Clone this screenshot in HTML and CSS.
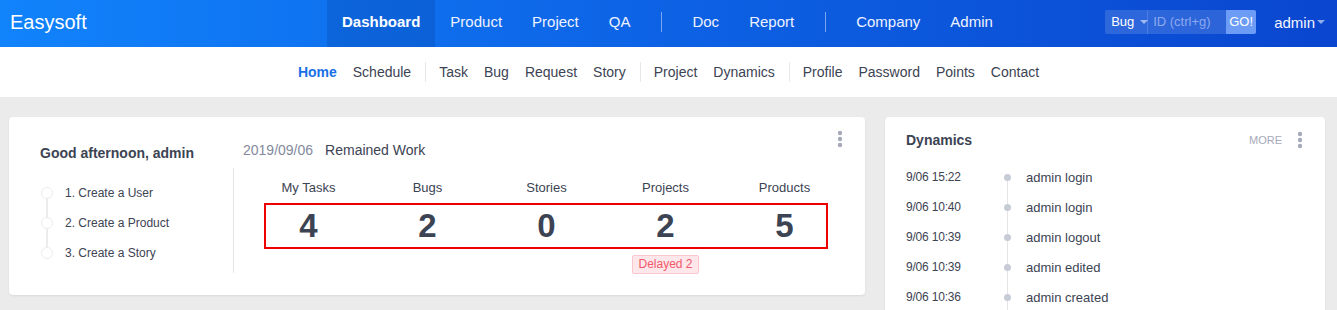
FILE: index.html
```html
<!DOCTYPE html>
<html lang="en">
<head>
<meta charset="utf-8">
<title>Easysoft Dashboard</title>
<link rel="stylesheet" href="styles.css">
</head>
<body>
<header class="topbar">
  <div class="brand">Easysoft</div>
  <nav class="mainnav">
    <a class="nav-item active" href="#">Dashboard</a>
    <a class="nav-item" href="#">Product</a>
    <a class="nav-item" href="#">Project</a>
    <a class="nav-item" href="#">QA</a>
    <span class="nav-sep"></span>
    <a class="nav-item" href="#">Doc</a>
    <a class="nav-item" href="#">Report</a>
    <span class="nav-sep"></span>
    <a class="nav-item" href="#">Company</a>
    <a class="nav-item" href="#">Admin</a>
  </nav>
  <div class="search">
    <span class="search-type">Bug<i class="caret caret-dim"></i></span>
    <input class="search-input" type="text" placeholder="ID (ctrl+g)">
    <button class="search-go">GO!</button>
  </div>
  <div class="user">admin<i class="caret caret-dim"></i></div>
</header>

<nav class="subnav">
  <a class="sub-item active" href="#">Home</a>
  <a class="sub-item" href="#">Schedule</a>
  <span class="sub-sep"></span>
  <a class="sub-item" href="#">Task</a>
  <a class="sub-item" href="#">Bug</a>
  <a class="sub-item" href="#">Request</a>
  <a class="sub-item" href="#">Story</a>
  <span class="sub-sep"></span>
  <a class="sub-item" href="#">Project</a>
  <a class="sub-item" href="#">Dynamics</a>
  <span class="sub-sep"></span>
  <a class="sub-item" href="#">Profile</a>
  <a class="sub-item" href="#">Password</a>
  <a class="sub-item" href="#">Points</a>
  <a class="sub-item" href="#">Contact</a>
</nav>

<main class="content">
  <section class="card welcome">
    <div class="greeting">Good afternoon, admin</div>
    <div class="work-title"><span class="date">2019/09/06</span><span class="remained">Remained Work</span></div>
    <ul class="steps">
      <li class="step"><span class="step-dot"></span>1. Create a User</li>
      <li class="step"><span class="step-dot"></span>2. Create a Product</li>
      <li class="step"><span class="step-dot"></span>3. Create a Story</li>
    </ul>
    <div class="stats">
      <div class="stat-labels">
        <span>My Tasks</span><span>Bugs</span><span>Stories</span><span>Projects</span><span>Products</span>
      </div>
      <div class="stat-values">
        <span>4</span><span>2</span><span>0</span><span>2</span><span>5</span>
      </div>
      <div class="stat-notes">
        <span></span><span></span><span></span><span><em class="badge">Delayed 2</em></span><span></span>
      </div>
    </div>
    <svg class="kebab" width="6" height="18" viewBox="0 0 6 18"><circle cx="3" cy="3" r="2.2"/><circle cx="3" cy="9" r="2.2"/><circle cx="3" cy="15" r="2.2"/></svg>
  </section>

  <section class="card dynamics">
    <div class="dyn-head">
      <h3 class="dyn-title">Dynamics</h3>
      <span class="more">MORE</span>
      <svg class="kebab-inline" width="6" height="18" viewBox="0 0 6 18"><circle cx="3" cy="3" r="2.2"/><circle cx="3" cy="9" r="2.2"/><circle cx="3" cy="15" r="2.2"/></svg>
    </div>
    <ul class="dyn-list">
      <li class="dyn-row first"><span class="dyn-time">9/06 15:22</span><span class="dyn-dot"></span><span class="dyn-text">admin login</span></li>
      <li class="dyn-row"><span class="dyn-time">9/06 10:40</span><span class="dyn-dot"></span><span class="dyn-text">admin login</span></li>
      <li class="dyn-row"><span class="dyn-time">9/06 10:39</span><span class="dyn-dot"></span><span class="dyn-text">admin logout</span></li>
      <li class="dyn-row"><span class="dyn-time">9/06 10:39</span><span class="dyn-dot"></span><span class="dyn-text">admin edited</span></li>
      <li class="dyn-row"><span class="dyn-time">9/06 10:36</span><span class="dyn-dot"></span><span class="dyn-text">admin created</span></li>
    </ul>
  </section>
</main>
</body>
</html>
```
FILE: styles.css
```css
* { box-sizing: border-box; }
html, body { margin: 0; padding: 0; }
body {
  font-family: "Liberation Sans", Arial, sans-serif;
  background: #ebebeb;
  color: #3c4353;
  overflow: hidden;
}
a { text-decoration: none; color: inherit; }
ul { list-style: none; margin: 0; padding: 0; }

/* top bar */
.topbar {
  height: 47px;
  display: flex;
  align-items: center;
  background: linear-gradient(90deg, #1183fb 0%, #0d62e4 50%, #0a46cf 100%);
  color: #fff;
  padding-right: 12px;
}
.brand {
  width: 327px;
  padding: 0 0 3px 10px;
  font-size: 20px;
  line-height: 44px;
  color: #fff;
}
.mainnav {
  display: flex;
  align-items: center;
  height: 47px;
}
.nav-item {
  display: block;
  padding: 0 15px 3px;
  line-height: 44px;
  font-size: 15px;
  color: #eef3ff;
}
.nav-item.active {
  background: rgba(0, 40, 120, 0.18);
  font-weight: bold;
  color: #fff;
}
.nav-sep {
  width: 1px;
  height: 20px;
  margin: 0 15px 3px 16px;
  background: rgba(255, 255, 255, 0.45);
}
.search {
  margin-left: auto;
  margin-bottom: 4px;
  display: flex;
  height: 24px;
  background: rgba(255, 255, 255, 0.14);
  border-radius: 2px;
  font-size: 13px;
}
.search-type {
  display: flex;
  align-items: center;
  padding: 0 4px 0 6px;
  width: 43px;
  border-right: 1px solid rgba(255, 255, 255, 0.16);
  color: #fff;
}
.search-input {
  width: 78px;
  border: 0;
  background: transparent;
  font: 13px "Liberation Sans", Arial, sans-serif;
  color: #fff;
  padding: 0 0 0 5px;
  outline: none;
}
.search-input::placeholder { color: #8da8ee; }
.search-go {
  width: 30px;
  border: 0;
  padding: 0;
  background: #6c9cf6;
  color: #fff;
  font: 13px "Liberation Sans", Arial, sans-serif;
  border-radius: 0 2px 2px 0;
}
.user {
  margin: 0 0 3px 18px;
  font-size: 15px;
  display: flex;
  align-items: center;
  color: #f3f6ff;
}
.caret {
  display: inline-block;
  width: 0;
  height: 0;
  border-left: 4px solid transparent;
  border-right: 4px solid transparent;
  border-top: 4px solid rgba(255, 255, 255, 0.55);
  margin-left: 6px;
}
.user .caret { margin-left: 2px; }

/* sub nav */
.subnav {
  height: 50px;
  background: #fff;
  display: flex;
  justify-content: center;
  align-items: center;
  font-size: 14px;
}
.sub-item {
  padding: 0 8px;
  line-height: 20px;
  color: #3c4353;
}
.sub-item.active {
  color: #1970e6;
  font-weight: bold;
}
.sub-sep {
  width: 1px;
  height: 20px;
  background: #e8e8e8;
  margin: 0 5px 0 6px;
}

/* content */
.content {
  display: flex;
  gap: 20px;
  padding: 20px 12px 0 9px;
  align-items: flex-start;
}
.card {
  background: #fff;
  border-radius: 4px;
  box-shadow: 0 1px 2px rgba(0, 0, 0, 0.08);
  position: relative;
}
.welcome {
  flex: 1;
  height: 178px;
  display: grid;
  grid-template-columns: 224px 1fr;
  grid-template-rows: 51px 105px;
}
.greeting {
  padding: 26px 0 0 31px;
  font-size: 14px;
  font-weight: bold;
  line-height: 20px;
  color: #3c4353;
}
.work-title {
  padding: 23px 0 0 10px;
  font-size: 14px;
  line-height: 20px;
}
.date { color: #838a9d; margin-right: 12px; }
.remained { color: #3c4353; }

.steps {
  padding: 10px 0 0 32px;
}
.step {
  position: relative;
  height: 30px;
  line-height: 30px;
  font-size: 12px;
  padding-left: 24px;
  color: #3c4353;
}
.step-dot {
  position: absolute;
  left: 0;
  top: 9px;
  width: 12px;
  height: 12px;
  border: 1px solid #ececec;
  border-radius: 50%;
  background: #fff;
  z-index: 1;
}
.step + .step::before {
  content: "";
  position: absolute;
  left: 5px;
  top: -15px;
  height: 30px;
  width: 2px;
  background: #ececec;
}

.stats {
  border-left: 1px solid #e5e5e5;
  padding: 10px 21px 0 15px;
}
.stat-labels,
.stat-values,
.stat-notes {
  display: grid;
  grid-template-columns: repeat(5, 1fr);
  text-align: center;
}
.stat-labels {
  font-size: 13px;
  line-height: 20px;
  color: #3c4353;
}
.stat-values {
  position: relative;
  margin-top: 5px;
  height: 46px;
  line-height: 46px;
  font-size: 33px;
  font-weight: bold;
  color: #3c4353;
}
.stat-values::after {
  content: "";
  position: absolute;
  left: 15px;
  right: 16px;
  top: 0;
  bottom: 0;
  border: 2px solid #ee0000;
}
.stat-notes {
  margin-top: 5px;
}
.badge {
  display: inline-block;
  font-style: normal;
  font-size: 12px;
  line-height: 17px;
  padding: 0 5px;
  color: #f2586a;
  background: #fde7ea;
  border: 1px solid #fbc7cf;
  border-radius: 2px;
}
.kebab {
  position: absolute;
  right: 22px;
  top: 13px;
  fill: #a6aab8;
}

/* dynamics */
.dynamics {
  width: 440px;
  height: 220px;
}
.dyn-head {
  height: 45px;
  display: flex;
  align-items: center;
  padding: 0 22px 0 21px;
}
.dyn-title {
  margin: 0;
  font-size: 14px;
  font-weight: bold;
  color: #3c4353;
  flex: 1;
}
.more {
  font-size: 11px;
  color: #a6aab8;
  margin-right: 15px;
}
.kebab-inline { fill: #a6aab8; }
.dyn-list {
  padding-left: 21px;
}
.dyn-row {
  display: flex;
  align-items: center;
  height: 30px;
}
.dyn-time {
  width: 95px;
  font-size: 12px;
  letter-spacing: -0.2px;
  color: #3c4353;
}
.dyn-dot {
  position: relative;
  width: 13px;
  height: 30px;
}
.dyn-dot::before {
  content: "";
  position: absolute;
  left: 6px;
  top: 0;
  bottom: 0;
  width: 1px;
  background: #e5e5e5;
}
.dyn-row.first .dyn-dot::before { top: 15px; }
.dyn-dot::after {
  content: "";
  position: absolute;
  left: 3px;
  top: 12px;
  width: 7px;
  height: 7px;
  border-radius: 50%;
  background: #c7cbd6;
}
.dyn-text {
  margin-left: 12px;
  font-size: 13px;
  color: #3c4353;
}
```
